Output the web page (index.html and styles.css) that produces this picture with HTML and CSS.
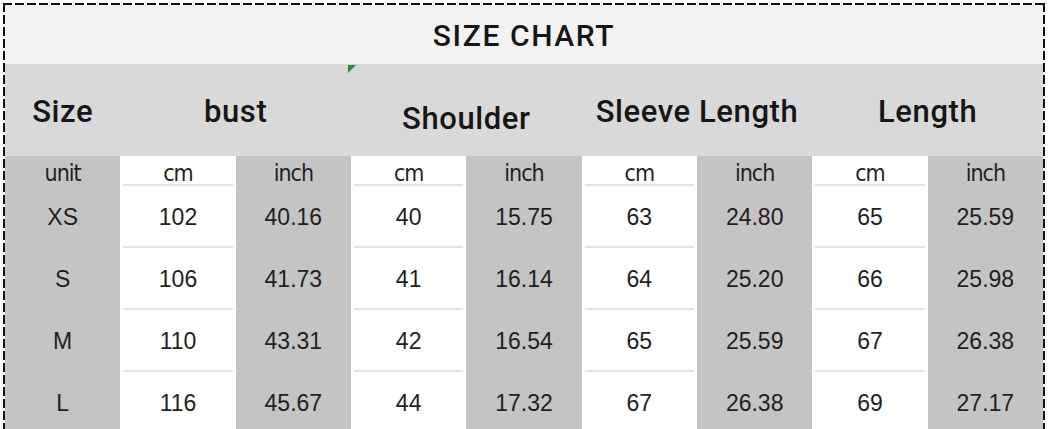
FILE: index.html
```html
<!DOCTYPE html>
<html>
<head>
<meta charset="utf-8">
<link rel="stylesheet" href="styles.css">
</head>
<body>
<div class="chart">
  <div class="title">SIZE CHART</div>
  <div class="head">
    <div class="h">Size</div>
    <div class="h span2">bust</div>
    <div class="h span2 low">Shoulder<span class="flag"></span></div>
    <div class="h span2">Sleeve Length</div>
    <div class="h span2">Length</div>
  </div>
  <div class="grid">
    <div class="c g u">unit</div><div class="c w u">cm</div><div class="c g u">inch</div><div class="c w u">cm</div><div class="c g u">inch</div><div class="c w u">cm</div><div class="c g u">inch</div><div class="c w u">cm</div><div class="c g u">inch</div>

    <div class="c g">XS</div><div class="c w">102</div><div class="c g">40.16</div><div class="c w">40</div><div class="c g">15.75</div><div class="c w">63</div><div class="c g">24.80</div><div class="c w">65</div><div class="c g">25.59</div>

    <div class="c g">S</div><div class="c w">106</div><div class="c g">41.73</div><div class="c w">41</div><div class="c g">16.14</div><div class="c w">64</div><div class="c g">25.20</div><div class="c w">66</div><div class="c g">25.98</div>

    <div class="c g">M</div><div class="c w">110</div><div class="c g">43.31</div><div class="c w">42</div><div class="c g">16.54</div><div class="c w">65</div><div class="c g">25.59</div><div class="c w">67</div><div class="c g">26.38</div>

    <div class="c g">L</div><div class="c w">116</div><div class="c g">45.67</div><div class="c w">44</div><div class="c g">17.32</div><div class="c w">67</div><div class="c g">26.38</div><div class="c w">69</div><div class="c g">27.17</div>
  </div>
</div>
</body>
</html>
```
FILE: styles.css
```css
html, body {
  margin: 0;
  padding: 0;
  background: #ffffff;
  overflow: hidden;
}
body {
  width: 1050px;
  height: 429px;
}
.chart {
  margin: 3px 0 0 3px;
  width: 1042px;
  padding: 2px 2px 0 2px;
  box-sizing: border-box;
  background:
    repeating-linear-gradient(90deg, #111 0 9px, transparent 9px 12px) left top / 100% 2px no-repeat,
    repeating-linear-gradient(180deg, #111 0 9px, transparent 9px 12px) left top / 2px 100% no-repeat,
    repeating-linear-gradient(180deg, #111 0 9px, transparent 9px 12px) right top / 2px 100% no-repeat,
    #fff;
}
.title {
  height: 59px;
  background: #f2f2f2;
  display: flex;
  align-items: center;
  justify-content: center;
  font-family: Roboto, "Liberation Sans", sans-serif;
  font-weight: 500;
  font-size: 30px;
  letter-spacing: 1.6px;
  color: #161616;
  padding-top: 2px;
  box-sizing: border-box;
}
.head {
  display: grid;
  grid-template-columns: repeat(9, 1fr);
  height: 92px;
  background: #d9d9d9;
}
.h {
  display: flex;
  align-items: center;
  justify-content: center;
  font-family: Roboto, "Liberation Sans", sans-serif;
  font-weight: 500;
  font-size: 31px;
  color: #161616;
  padding-top: 2px;
  letter-spacing: 0.6px;
  position: relative;
}
.span2 { grid-column: span 2; }
.low { padding-top: 16px; }
.flag {
  position: absolute;
  left: -3px;
  top: 1px;
  width: 0;
  height: 0;
  border-top: 8px solid #2f8a3c;
  border-right: 8px solid transparent;
}
.grid {
  display: grid;
  grid-template-columns: repeat(9, 1fr);
  grid-template-rows: 30px repeat(4, 62px);
}
.c {
  display: flex;
  align-items: center;
  justify-content: center;
  font-family: "Liberation Sans", Arial, sans-serif;
  font-size: 23px;
  color: #1f1f1f;
}
.u {
  font-family: "DejaVu Sans Condensed", "DejaVu Sans", sans-serif;
  font-size: 23px;
  padding-top: 4px;
  letter-spacing: -1px;
}
.g { background: #c4c4c4; }
.w {
  background: linear-gradient(#e4e4e4, #e4e4e4) no-repeat center bottom / calc(100% - 6px) 2px, #ffffff;
}
```
